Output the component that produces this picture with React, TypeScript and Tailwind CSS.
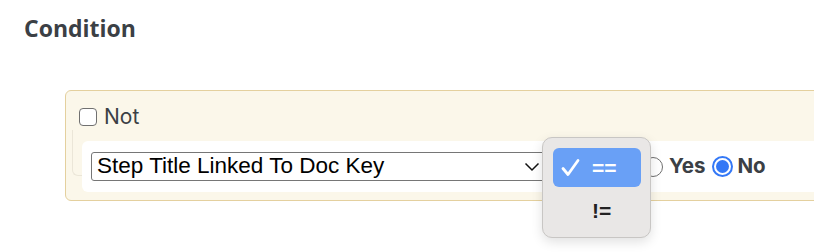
import React from "react";

const Radio = ({ checked }: { checked?: boolean }) => (
  <span
    className={
      checked
        ? "flex h-[21px] w-[21px] shrink-0 items-center justify-center rounded-full border-[2px] border-[#3478f6] bg-white"
        : "h-[20px] w-[20px] shrink-0 rounded-full border border-[#6f6f6f] bg-white"
    }
  >
    {checked && <span className="h-[13px] w-[13px] rounded-full bg-[#3478f6]" />}
  </span>
);

const App = () => {
  return (
    <div className="relative h-[252px] w-[814px] overflow-hidden bg-white font-['Inter',sans-serif] text-[#3b4045]">
      <h2 className="pl-6 pt-[13px] font-['Open_Sans',sans-serif] text-[23px] font-bold leading-[30px]">
        Condition
      </h2>

      <div className="relative ml-[65px] mt-[47px] h-[111px] w-[780px] rounded-md border border-[#e4d09e] bg-[#fbf7ea]">
        {/* faint nested group outline */}
        <div className="absolute left-[6px] top-[39px] h-[46px] w-[40px] rounded-bl-md border-b border-l border-[#ebe6d8]" />

        <div className="flex items-center gap-[7px] pl-[13px] pt-[15px]">
          <span className="h-[18px] w-[18px] rounded-[4px] border-[1.5px] border-[#707070] bg-white" />
          <span className="text-[21px] leading-[22px]">Not</span>
        </div>

        <div className="relative ml-[16px] mt-[13px] flex h-[51px] items-center rounded-md bg-white pl-[9px]">
          <div className="flex h-[29px] w-[454px] items-center justify-between rounded-[3px] border border-[#767676] bg-white pl-[5px] pr-[4px] font-['Liberation_Sans',sans-serif] text-[22.5px] leading-none text-black">
            <span>Step Title Linked To Doc Key</span>
            <svg width="16" height="10" viewBox="0 0 16 10" fill="none">
              <path d="M1.5 1.5 L8 8 L14.5 1.5" stroke="#111" strokeWidth="1.5" />
            </svg>
          </div>
          <div className="ml-[8px] h-[29px] w-[86px] rounded-[3px] border border-[#767676]" />
          <div className="ml-[4px] flex items-center text-[20.5px] font-bold">
            <Radio />
            <span className="ml-[6px]">Yes</span>
            <span className="ml-[7px]">
              <Radio checked />
            </span>
            <span className="ml-[4px]">No</span>
          </div>
        </div>
      </div>

      {/* open operator menu */}
      <div className="absolute left-[542px] top-[137px] h-[101px] w-[109px] rounded-[10px] border border-[#c8c6c4] bg-[#e9e7e6] shadow-[0_4px_12px_rgba(0,0,0,0.12)]">
        <div className="ml-[10px] mt-[10px] flex h-[39px] w-[88px] items-center rounded-[6px] bg-[#69a0f6] pl-[8px] text-white">
          <svg width="19" height="19" viewBox="0 0 19 19" fill="none">
            <path d="M2 10.5 L7 16.5 L17 2.5" stroke="white" strokeWidth="2.8" strokeLinecap="round" strokeLinejoin="round" />
          </svg>
          <span className="ml-[12px] font-['Liberation_Sans',sans-serif] text-[21px] font-bold leading-none">==</span>
        </div>
        <div className="mt-[13px] pl-[49px] font-['Liberation_Sans',sans-serif] text-[21px] font-bold leading-none text-[#222]">
          !=
        </div>
      </div>
    </div>
  );
};

export default App;
